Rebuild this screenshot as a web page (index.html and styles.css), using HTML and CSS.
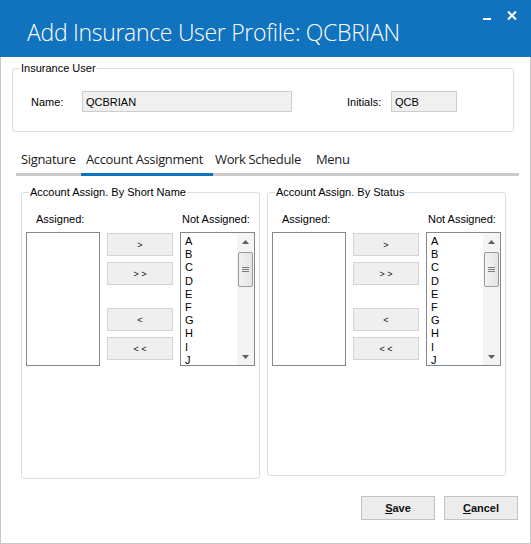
FILE: index.html
```html
<!DOCTYPE html>
<html lang="en-us">
<head>
    <meta charset="utf-8">
    <title>Add Insurance User Profile</title>
    <link rel="stylesheet" href="styles.css">
</head>
<body>
    <div class="window">
        <div class="titlebar">
            <h1 class="title">Add Insurance User Profile: QCBRIAN</h1>
            <div class="controls">
                <svg class="ctl-min" width="8" height="3" viewBox="0 0 8 3"><rect x="0" y="0" width="8" height="2" fill="#fff"/></svg>
                <svg class="ctl-close" width="10" height="9" viewBox="0 0 10 9"><path d="M1 0.5 L9 8.5 M9 0.5 L1 8.5" stroke="#fff" stroke-width="2"/></svg>
            </div>
        </div>

        <div class="body">
            <fieldset class="group user-group">
                <legend>Insurance User</legend>
                <div class="user-row">
                    <label class="lbl lbl-name">Name:</label>
                    <input type="text" class="field field-name" value="QCBRIAN" readonly>
                    <label class="lbl lbl-initials">Initials:</label>
                    <input type="text" class="field field-initials" value="QCB" readonly>
                </div>
            </fieldset>

            <div class="tabs">
                <div class="tab tab-sig">Signature</div>
                <div class="tab tab-acc active">Account Assignment</div>
                <div class="tab tab-work">Work Schedule</div>
                <div class="tab tab-menu">Menu</div>
            </div>

            <div class="panel">
                <fieldset class="group assign-group left">
                    <legend>Account Assign. By Short Name</legend>
                    <div class="assign-grid">
                        <div class="col-label lbl-assigned">Assigned:</div>
                        <div></div>
                        <div class="col-label lbl-notassigned">Not Assigned:</div>

                        <div class="listbox"></div>
                        <div class="move-buttons">
                            <button class="move">&gt;</button>
                            <button class="move">&gt; &gt;</button>
                            <button class="move gap">&lt;</button>
                            <button class="move">&lt; &lt;</button>
                        </div>
                        <div class="listbox items">
                            <ul class="item-list">
                                <li>A</li><li>B</li><li>C</li><li>D</li><li>E</li>
                                <li>F</li><li>G</li><li>H</li><li>I</li><li>J</li>
                            </ul>
                            <div class="scrollbar">
                                <div class="arrow"><svg width="7" height="4" viewBox="0 0 7 4"><path d="M0 4 L3.5 0 L7 4 Z" fill="#5f5f5f"/></svg></div>
                                <div class="thumb"><span></span><span></span><span></span></div>
                                <div class="track-fill"></div>
                                <div class="arrow"><svg width="7" height="4" viewBox="0 0 7 4"><path d="M0 0 L7 0 L3.5 4 Z" fill="#5f5f5f"/></svg></div>
                            </div>
                        </div>
                    </div>
                </fieldset>

                <fieldset class="group assign-group right">
                    <legend>Account Assign. By Status</legend>
                    <div class="assign-grid">
                        <div class="col-label lbl-assigned">Assigned:</div>
                        <div></div>
                        <div class="col-label lbl-notassigned">Not Assigned:</div>

                        <div class="listbox"></div>
                        <div class="move-buttons">
                            <button class="move">&gt;</button>
                            <button class="move">&gt; &gt;</button>
                            <button class="move gap">&lt;</button>
                            <button class="move">&lt; &lt;</button>
                        </div>
                        <div class="listbox items">
                            <ul class="item-list">
                                <li>A</li><li>B</li><li>C</li><li>D</li><li>E</li>
                                <li>F</li><li>G</li><li>H</li><li>I</li><li>J</li>
                            </ul>
                            <div class="scrollbar">
                                <div class="arrow"><svg width="7" height="4" viewBox="0 0 7 4"><path d="M0 4 L3.5 0 L7 4 Z" fill="#5f5f5f"/></svg></div>
                                <div class="thumb"><span></span><span></span><span></span></div>
                                <div class="track-fill"></div>
                                <div class="arrow"><svg width="7" height="4" viewBox="0 0 7 4"><path d="M0 0 L7 0 L3.5 4 Z" fill="#5f5f5f"/></svg></div>
                            </div>
                        </div>
                    </div>
                </fieldset>
            </div>

            <div class="actions">
                <button class="action"><u>S</u>ave</button>
                <button class="action"><u>C</u>ancel</button>
            </div>
        </div>
    </div>
</body>
</html>
```

FILE: styles.css
```css
body {
    margin: 0;
    padding: 0;
    background: #fff;
    font-family: "Liberation Sans", Arial, sans-serif;
    font-size: 11px;
    color: #000;
}
.window {
    width: 531px;
    height: 544px;
    display: flex;
    flex-direction: column;
}
.titlebar {
    height: 57px;
    background: #1172be;
    display: flex;
    align-items: flex-start;
    padding-left: 27px;
    box-sizing: border-box;
}
.title {
    margin: 17px 0 0 0;
    font-family: "Open Sans", "Noto Sans", sans-serif;
    font-weight: 300;
    font-size: 23px;
    letter-spacing: -0.3px;
    line-height: 30px;
    color: #fff;
    white-space: nowrap;
}
.controls {
    margin-left: auto;
    display: flex;
    align-items: flex-start;
}
.ctl-min {
    margin: 18px 16px 0 0;
}
.ctl-close {
    margin: 11px 14px 0 0;
}
.body {
    flex: 1;
    border: 1px solid #c8c8c8;
    border-top: none;
    display: flex;
    flex-direction: column;
}

/* group boxes */
.group {
    margin: 0;
    padding: 0;
    border: 1px solid #d5dfe5;
    border-radius: 3px;
}
.group legend {
    padding: 0 1px;
    line-height: 13px;
    font-size: 11px;
}
.user-group {
    margin: 5px 16px 0 11px;
    padding: 0 7px;
}
.user-row {
    display: flex;
    align-items: center;
    margin: 16px 0 19px 11px;
}
.lbl {
    display: block;
}
.lbl-name {
    width: 51px;
}
.lbl-initials {
    width: 44px;
    margin-left: 55px;
}
.field {
    box-sizing: border-box;
    height: 21px;
    margin: 0;
    padding: 0 0 0 3px;
    border: 1px solid #cdcdcd;
    background: #f0f0f0;
    font-family: "Liberation Sans", Arial, sans-serif;
    font-size: 11px;
    color: #000;
    outline: none;
}
.field-name {
    width: 210px;
}
.field-initials {
    width: 66px;
}

/* tabs */
.tabs {
    display: flex;
    margin: 18px 11px 0 15px;
    border-bottom: 3px solid #cbcbcb;
    font-family: "Open Sans", "Noto Sans", sans-serif;
    font-size: 13px;
    letter-spacing: -0.35px;
    color: #222;
}
.tab {
    box-sizing: border-box;
    padding: 0 0 5px 5px;
    line-height: 18px;
    margin-bottom: -3px;
    border-bottom: 3px solid transparent;
    white-space: nowrap;
}
.tab-sig { width: 65px; }
.tab-acc { width: 132px; }
.tab-work { width: 98px; padding-left: 2px; }
.tab-menu { width: 45px; }
.tab.active {
    border-bottom-color: #1172be;
}

/* account assignment panels */
.panel {
    display: flex;
    align-items: flex-start;
    gap: 7px;
    margin: 10px 0 0 20px;
}
.assign-group {
    width: 238px;
    box-sizing: border-box;
    padding: 0 4px;
}
.assign-group legend {
    margin-left: 3px;
}
.assign-group.left {
    height: 293px;
}
.assign-group.right {
    height: 290px;
}
.assign-grid {
    display: grid;
    grid-template-columns: 74px 66px 75px;
    grid-template-rows: 13px auto;
    column-gap: 7px;
    row-gap: 6px;
    margin-top: 14px;
}
.col-label {
    line-height: 13px;
    white-space: nowrap;
}
.lbl-assigned {
    padding-left: 10px;
}
.lbl-notassigned {
    padding-left: 2px;
}
.listbox {
    box-sizing: border-box;
    height: 134px;
    border: 1px solid #828790;
    background: #fff;
}
.listbox.items {
    display: flex;
}
.item-list {
    flex: 1;
    list-style: none;
    margin: 0;
    padding: 2px 0 0 4px;
    line-height: 13.2px;
    font-size: 11px;
}
.scrollbar {
    width: 17px;
    background: #f4f4f4;
    display: flex;
    flex-direction: column;
    align-items: center;
}
.scrollbar .arrow {
    height: 17px;
    display: flex;
    align-items: center;
    justify-content: center;
}
.thumb {
    box-sizing: border-box;
    width: 15px;
    height: 35px;
    margin-top: 2px;
    border: 1px solid #9a9a9a;
    border-radius: 2px;
    background: linear-gradient(to right, #f2f2f2, #e4e4e4);
    display: flex;
    flex-direction: column;
    align-items: center;
    justify-content: center;
    gap: 1px;
}
.thumb span {
    display: block;
    width: 7px;
    height: 1px;
    background: #7d7d7d;
}
.track-fill {
    flex: 1;
}
.move-buttons {
    display: flex;
    flex-direction: column;
}
.move {
    box-sizing: border-box;
    height: 23px;
    margin: 6px 0 0 0;
    padding: 0;
    border: 1px solid #d4d4d4;
    background: #efefef;
    font-family: "Liberation Sans", Arial, sans-serif;
    font-size: 9px;
    color: #111;
}
.move:first-child {
    margin-top: 1px;
}
.move.gap {
    margin-top: 23px;
}

/* bottom buttons */
.actions {
    display: flex;
    justify-content: flex-end;
    gap: 9px;
    margin: 17px 12px 0 0;
}
.action {
    box-sizing: border-box;
    width: 74px;
    height: 24px;
    padding: 0;
    border: 1px solid #c2c2c2;
    background: #ececec;
    font-family: "Liberation Sans", Arial, sans-serif;
    font-weight: bold;
    font-size: 11px;
    color: #111;
}
```
